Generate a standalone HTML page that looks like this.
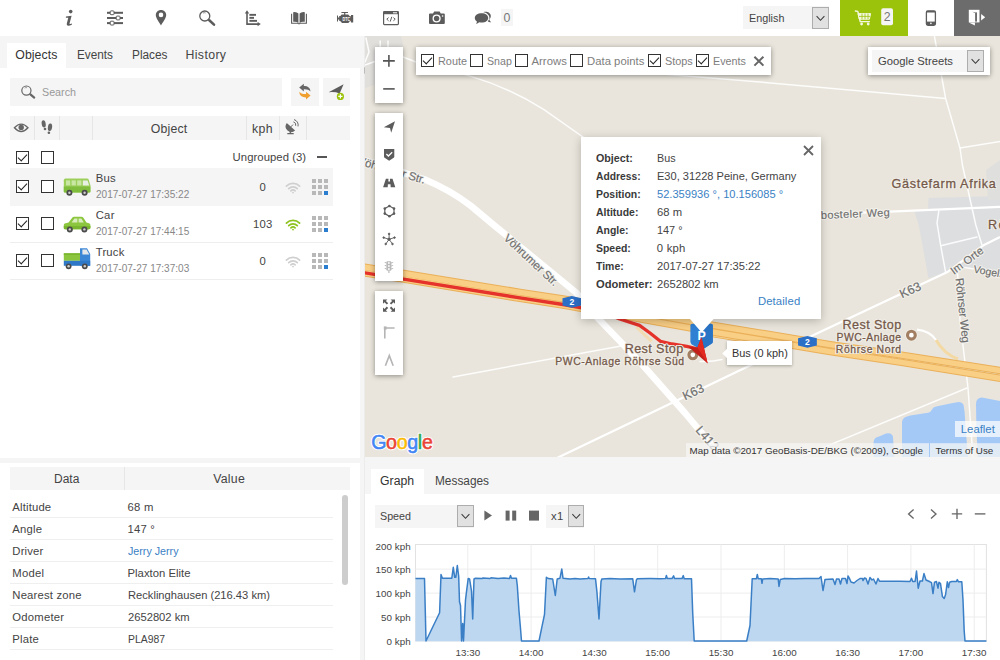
<!DOCTYPE html>
<html lang="en">
<head>
<meta charset="utf-8">
<title>GPS Tracking</title>
<style>
*{box-sizing:border-box;margin:0;padding:0}
html,body{width:1000px;height:660px;overflow:hidden;background:#fff}
body{font-family:"Liberation Sans","DejaVu Sans",sans-serif;font-size:12px;color:#444;position:relative}
.abs{position:absolute}
.t{position:absolute;white-space:nowrap;line-height:16px}
.cb{position:absolute;width:13px;height:13px;border:1px solid #333;background:#fff}
.cb.on:after{content:"";position:absolute;left:1px;top:1.5px;width:8px;height:4px;border-left:1.5px solid #222;border-bottom:1.5px solid #222;transform:rotate(-47deg)}
.ddb{position:absolute;background:#e1e1e1;border:1px solid #adadad}
.box{position:absolute;background:#fff;box-shadow:0 1px 5px rgba(0,0,0,.4)}
svg{position:absolute;overflow:visible}
svg text{white-space:pre}
</style>
</head>
<body>
<div class="abs" style="left:0px;top:36px;width:360px;height:32px;background:#f5f5f5"></div>
<div class="abs" style="left:360px;top:36px;width:5px;height:624px;background:#f5f5f5"></div>
<div class="abs" style="left:364px;top:36px;width:1px;height:624px;background:#ececec"></div>
<div class="abs" style="left:0px;top:458px;width:360px;height:5px;background:#f5f5f5"></div>
<div class="abs" style="left:365px;top:457px;width:635px;height:37px;background:#f5f5f5"></div>
<svg style="left:364px;top:66px" width="4" height="9" viewBox="0 0 4 9"><path d="M0.5 1 L3 4.5 L0.5 8 Z" fill="#8a8a8a"/></svg>
<svg style="left:0;top:0" width="540" height="36" viewBox="0 0 540 36">
<g fill="#5c5c5c" stroke="none">
<circle cx="70.7" cy="11.6" r="1.8"/>
<path d="M66 16.6 L71.6 15.7 L69.6 23.2 Q69.4 24.2 70.3 24.1 L72 23.6 L71.8 24.7 Q69.6 25.8 68 25.7 Q66.3 25.5 66.8 23.5 L68.3 17.8 L65.8 17.7 Z"/>
<rect x="107" y="11.8" width="16" height="2"/><rect x="107" y="17" width="16" height="2"/><rect x="107" y="22.1" width="16" height="2"/>
<rect x="110.2" y="10.9" width="3.8" height="3.8" rx="0.8" fill="#fff" stroke="#5c5c5c" stroke-width="1"/>
<rect x="116.2" y="16.1" width="3.8" height="3.8" rx="0.8" fill="#fff" stroke="#5c5c5c" stroke-width="1"/>
<rect x="110.2" y="21.2" width="3.8" height="3.8" rx="0.8" fill="#fff" stroke="#5c5c5c" stroke-width="1"/>
<path fill-rule="evenodd" d="M161 10 C164 10 166.2 12.2 166.2 15.1 C166.2 18.2 162.6 22.6 161 25.5 C159.4 22.6 155.8 18.2 155.8 15.1 C155.8 12.2 158 10 161 10 Z M161 12.6 A2.3 2.3 0 1 0 161 17.2 A2.3 2.3 0 1 0 161 12.6 Z"/>
<circle cx="204.8" cy="16" r="5" fill="none" stroke="#5c5c5c" stroke-width="1.3"/>
<path d="M203 13 Q204.5 12.4 205.6 12.9" fill="none" stroke="#5c5c5c" stroke-width="0.7"/>
<path d="M209.3 20.3 L214 24.6" stroke="#5c5c5c" stroke-width="2.6" stroke-linecap="round"/>
<path d="M247 10.3 L249.2 13.4 L247.8 13.4 L247.8 23.3 L257.6 23.3 L257.6 21.9 L260.8 24.1 L257.6 26.3 L257.6 24.9 L246.2 24.9 L246.2 13.4 L244.8 13.4 Z"/>
<rect x="249.4" y="13.9" width="6.6" height="1.9"/><rect x="249.4" y="16.9" width="4.6" height="1.9"/><rect x="249.4" y="19.9" width="7.6" height="1.9"/>
<path d="M293.2 12.2 Q296.5 11.6 298.4 13.6 L298.4 22.9 Q296.3 21.2 293.2 21.8 Z"/>
<path d="M304.8 12.2 Q301.5 11.6 299.6 13.6 L299.6 22.9 Q301.7 21.2 304.8 21.8 Z"/>
<path d="M291.6 13.8 L291.6 23.3 L298 23.3 Q299 24.2 300 23.3 L306.4 23.3 L306.4 13.8" fill="none" stroke="#5c5c5c" stroke-width="1.1"/>
<path d="M341.4 12 L348 12 L348 13.1 L345.3 13.1 L345.3 14.4 L348.2 14.4 L349.8 16.2 L351 16.2 L351 15 L353.2 15 L353.2 22.4 L351 22.4 L351 21.2 L349.8 21.2 L348.4 23 L342 23 L340.2 21 L339.2 21 L339.2 19.4 L338 19.4 L338 21.6 L337 21.6 L337 15.4 L338 15.4 L338 17.6 L339.2 17.6 L339.2 16 L340.4 16 L341.6 14.4 L344.1 14.4 L344.1 13.1 L341.4 13.1 Z"/>
<rect x="383.6" y="11.6" width="14.8" height="13" rx="0.8" fill="none" stroke="#5c5c5c" stroke-width="1.2"/>
<rect x="383.6" y="11.6" width="14.8" height="2.6"/>
<rect x="393" y="12.3" width="4" height="1" fill="#fff"/>
<path d="M388.6 17.6 L386.8 19.2 L388.6 20.8 M393.4 17.6 L395.2 19.2 L393.4 20.8 M391.8 16.8 L390.2 21.6" fill="none" stroke="#5c5c5c" stroke-width="1"/>
<path fill-rule="evenodd" d="M430 13.6 L433 13.6 L434.2 11.6 L439.6 11.6 L440.8 13.6 L443.8 13.6 Q444.8 13.6 444.8 14.6 L444.8 23 Q444.8 24 443.8 24 L430 24 Q429 24 429 23 L429 14.6 Q429 13.6 430 13.6 Z M436.6 14.4 A4.1 4.1 0 1 0 436.6 22.6 A4.1 4.1 0 1 0 436.6 14.4 Z M442.6 15.2 A0.8 0.8 0 1 0 442.6 16.8 A0.8 0.8 0 1 0 442.6 15.2 Z"/>
<circle cx="436.6" cy="18.5" r="2.7"/>
<path d="M481.6 13.2 C485.4 13.2 488.2 15.2 488.2 17.9 C488.2 20.6 485.4 22.6 481.6 22.6 C480.8 22.6 480 22.5 479.3 22.3 C478.4 23.2 477.2 23.8 476 24 C476.6 23.2 476.9 22.3 476.9 21.4 C475.6 20.5 474.8 19.3 474.8 17.9 C474.8 15.2 477.8 13.2 481.6 13.2 Z"/>
<path d="M483.4 12.2 C486.4 11 490.6 12.6 490.8 15.8 C490.9 17.2 490.3 18.4 489.4 19.2 C489.5 20.4 490.2 21.4 491.2 22.2 C489.8 22.3 488.6 21.8 487.8 21.2 C489 20.2 489.5 18.9 489.4 17.6 C489.2 14.6 486.4 12.6 483.4 12.2 Z"/>
</g>
<text x="342.6" y="20.6" font-size="4.6" font-weight="bold" fill="#fff" font-family="Liberation Sans,sans-serif" textLength="7.6" lengthAdjust="spacingAndGlyphs">DTC</text>
</svg>
<div class="abs" style="left:501px;top:8.5px;width:12px;height:17px;background:#f5f5f5"></div>
<div class="t" style="left:503.58px;top:10.0px;font-size:12.3px;color:#777">0</div>
<div class="abs" style="left:743px;top:6px;width:86px;height:23px;background:#f5f5f5"></div>
<div class="t" style="left:748.80px;top:10.0px;font-size:11.3px;color:#444;transform:scaleX(0.9551);transform-origin:0 0">English</div>
<div class="ddb" style="left:812px;top:7px;width:17px;height:22px"><svg width="17" height="22" viewBox="0 0 17 22" style="position:absolute;left:-1px;top:-1px"><path d="M4.6 9.2 L8.5 13.3 L12.4 9.2" fill="none" stroke="#3a3a3a" stroke-width="1.05"/></svg></div>
<div class="abs" style="left:840px;top:0px;width:68px;height:36px;background:#9cc30c"></div>
<div class="abs" style="left:954px;top:0px;width:46px;height:36px;background:#6c6c6c"></div>
<svg style="left:840px;top:0" width="160" height="36" viewBox="840 0 160 36">
<g fill="none" stroke="#f4f8e0" stroke-width="1.4" stroke-linejoin="round" stroke-linecap="round">
<path d="M855.4 11 L857.8 11.4 L860.2 21.6 L869.4 21.6"/>
<path d="M858.4 13.6 L870.6 13.6 L869.4 19.2 L859.6 19.2 Z" fill="#f4f8e0" stroke-width="1"/>
</g>
<g stroke="#9cc30c" stroke-width="0.8"><path d="M862 13.6 V19.2 M865 13.6 V19.2 M868 13.6 V19.2 M859 16.4 H870"/></g>
<circle cx="861.6" cy="24" r="1.4" fill="#f4f8e0"/><circle cx="868.2" cy="24" r="1.4" fill="#f4f8e0"/>
<rect x="881.2" y="8.2" width="11.8" height="17" rx="2" fill="#f5f5f5"/>
<rect x="926.4" y="10.9" width="9" height="14.4" rx="1.5" fill="none" stroke="#5c5c5c" stroke-width="1.3"/>
<rect x="926.4" y="21.6" width="9" height="3.4" fill="#5c5c5c"/>
<rect x="926.4" y="10.9" width="9" height="1.6" fill="#5c5c5c"/>
<circle cx="930.9" cy="23.4" r="0.8" fill="#fff"/>
<rect x="968.8" y="9.8" width="10.7" height="12.6" fill="#fff"/>
<path d="M968.8 22.4 H974.9 V25.6 Z" fill="#fff"/>
<rect x="975.1" y="12.4" width="1.9" height="9.2" fill="#6c6c6c"/>
<path d="M972.2 11.8 L975.2 12.3 L975.2 13 Z" fill="#6c6c6c"/>
<path d="M981.1 13.9 L985.2 17.2 L981.1 20.5 Z" fill="#fff"/>
</svg>
<div class="t" style="left:883.68px;top:9.0px;font-size:12.3px;color:#777">2</div>
<div class="abs" style="left:7px;top:43px;width:59px;height:25px;background:#fff"></div>
<div class="t" style="left:15.30px;top:47.0px;font-size:12.3px;color:#333;letter-spacing:0.050px">Objects</div>
<div class="t" style="left:76.60px;top:47.0px;font-size:12.3px;color:#444;transform:scaleX(0.9574);transform-origin:0 0">Events</div>
<div class="t" style="left:131.50px;top:47.0px;font-size:12.3px;color:#444;transform:scaleX(0.9616);transform-origin:0 0">Places</div>
<div class="t" style="left:185.50px;top:47.0px;font-size:12.3px;color:#444;letter-spacing:0.372px">History</div>
<div class="abs" style="left:10px;top:78px;width:272px;height:28px;background:#f5f5f5"></div>
<svg style="left:19px;top:84px" width="18" height="16" viewBox="19 84 18 16"><circle cx="26.4" cy="90.6" r="4.6" fill="none" stroke="#666" stroke-width="1.2"/><path d="M24.6 88 Q25.8 87.3 27 87.7" fill="none" stroke="#666" stroke-width="0.6"/><path d="M30.4 94.4 L34.2 97.6" stroke="#666" stroke-width="2.2" stroke-linecap="round"/></svg>
<div class="t" style="left:42.30px;top:84.0px;font-size:11.3px;color:#999;transform:scaleX(0.9496);transform-origin:0 0">Search</div>
<div class="abs" style="left:291px;top:78px;width:28px;height:28px;background:#f5f5f5"></div>
<div class="abs" style="left:322.5px;top:78px;width:27.5px;height:28px;background:#f5f5f5"></div>
<svg style="left:291px;top:78px" width="60" height="28" viewBox="291 78 60 28">
<path d="M299.2 87.6 L303.8 83.8 L303.8 86 C307.8 86 310.6 88 310.4 91.6 C309.2 89.8 307 89.2 303.8 89.3 L303.8 91.4 Z" fill="#666"/>
<path d="M310.6 95.6 L306 99.6 L306 97.4 C302 97.4 299.2 95.4 299.4 91.8 C300.6 93.6 302.8 94.2 306 94.1 L306 91.8 Z" fill="#f0a030"/>
<path d="M328.6 92.3 L343.6 84.2 L339.6 93.6 Q335 91.6 328.6 92.3 Z" fill="#5c5c5c"/>
<circle cx="340.4" cy="96.4" r="3.6" fill="#9cc30c"/>
<path d="M338.3 96.4 H342.5 M340.4 94.3 V98.5" stroke="#fff" stroke-width="1.2"/>
</svg>
<div class="abs" style="left:10px;top:116px;width:340px;height:24px;background:#f5f5f5"></div>
<div class="abs" style="left:34px;top:116px;width:1px;height:24px;background:#e6e6e6"></div>
<div class="abs" style="left:59px;top:116px;width:1px;height:24px;background:#e6e6e6"></div>
<div class="abs" style="left:92px;top:116px;width:1px;height:24px;background:#e6e6e6"></div>
<div class="abs" style="left:246px;top:116px;width:1px;height:24px;background:#e6e6e6"></div>
<div class="abs" style="left:279px;top:116px;width:1px;height:24px;background:#e6e6e6"></div>
<div class="abs" style="left:306px;top:116px;width:1px;height:24px;background:#e6e6e6"></div>
<svg style="left:10px;top:116px" width="300" height="24" viewBox="10 116 300 24">
<path d="M14.4 127.8 Q21.2 120.4 28 127.8 Q21.2 135.2 14.4 127.8 Z" fill="none" stroke="#666" stroke-width="1.3"/>
<circle cx="21.2" cy="127.4" r="2.7" fill="#666"/>
<ellipse cx="43.7" cy="123.8" rx="2" ry="3.7" fill="#666" transform="rotate(-10 43.7 123.8)"/>
<ellipse cx="45" cy="129" rx="1.3" ry="1.2" fill="#666"/>
<ellipse cx="50" cy="127.2" rx="2.1" ry="3.8" fill="#666" transform="rotate(8 50 127.2)"/>
<ellipse cx="48.9" cy="132.7" rx="1.3" ry="1.3" fill="#666"/>
<path d="M286.8 122.9 A5.7 5.7 0 0 0 295.1 130.6 Z" fill="#666"/>
<path d="M290.8 126.9 L293 124.6" stroke="#666" stroke-width="1"/>
<path d="M293.4 121.9 A3.2 3.2 0 0 1 295.7 125.8 M294.05 119.6 A5.6 5.6 0 0 1 298 126.4" fill="none" stroke="#666" stroke-width="1"/>
<path d="M290.3 131.2 V133.2 M287.3 133.6 H293.7" stroke="#666" stroke-width="1.3"/>
</svg>
<div class="t" style="left:150.70px;top:121.0px;font-size:12.3px;color:#444;letter-spacing:0.190px">Object</div>
<div class="t" style="left:252.10px;top:121.0px;font-size:12.3px;color:#444;letter-spacing:0.284px">kph</div>
<div class="cb on" style="left:15.5px;top:151px"></div>
<div class="cb" style="left:40.5px;top:151px"></div>
<div class="t" style="left:232.60px;top:149.0px;font-size:11.3px;color:#444;letter-spacing:0.053px">Ungrouped (3)</div>
<div class="abs" style="left:317px;top:156.3px;width:10px;height:1.5px;background:#555"></div>
<div class="abs" style="left:10px;top:168px;width:323px;height:38px;background:#f5f5f5"></div>
<div class="abs" style="left:10px;top:242px;width:323px;height:1px;background:#eeeeee"></div>
<div class="abs" style="left:10px;top:279px;width:323px;height:1px;background:#eeeeee"></div>
<div class="cb on" style="left:15.5px;top:180px"></div>
<div class="cb" style="left:40.5px;top:180px"></div>
<div class="cb on" style="left:15.5px;top:217px"></div>
<div class="cb" style="left:40.5px;top:217px"></div>
<div class="cb on" style="left:15.5px;top:254px"></div>
<div class="cb" style="left:40.5px;top:254px"></div>
<svg style="left:63px;top:177px" width="28" height="20" viewBox="0 0 28 20">
<path d="M2.5 1.5 H24 Q25.2 1.5 25.6 2.6 L27.4 8.2 V14.6 Q27.4 15.6 26.4 15.6 H1.8 Q0.8 15.6 0.8 14.6 V3.2 Q0.8 1.5 2.5 1.5 Z" fill="#9ccf5a"/>
<path d="M0.8 9.4 H27.4 V14.6 Q27.4 15.6 26.4 15.6 H1.8 Q0.8 15.6 0.8 14.6 Z" fill="#80bd3c"/>
<rect x="3" y="3.4" width="4.2" height="5" fill="#c9e7a3"/><rect x="8.6" y="3.4" width="4.2" height="5" fill="#c9e7a3"/><rect x="14.2" y="3.4" width="4.2" height="5" fill="#c9e7a3"/>
<path d="M19.8 3.4 H24.6 L26.2 8.4 H19.8 Z" fill="#e8f0e4"/>
<circle cx="6.4" cy="15.8" r="3" fill="#4a4a4a"/><circle cx="6.4" cy="15.8" r="1.2" fill="#cfcfcf"/>
<circle cx="21.6" cy="15.8" r="3" fill="#4a4a4a"/><circle cx="21.6" cy="15.8" r="1.2" fill="#cfcfcf"/>
</svg>
<svg style="left:63px;top:214px" width="28" height="20" viewBox="0 0 28 20">
<path d="M1.8 9.6 L5.6 8.6 L9.4 3.6 Q10 2.8 11 2.8 H18.4 Q19.6 2.8 20.4 3.8 L23.4 8.4 L26 9.2 Q27.4 9.6 27.4 11 V13.8 Q27.4 15.2 26 15.2 H2 Q0.8 15.2 0.8 14 V11 Q0.8 9.9 1.8 9.6 Z" fill="#8cc63e"/>
<path d="M0.8 12 H27.4 V13.8 Q27.4 15.2 26 15.2 H2 Q0.8 15.2 0.8 14 Z" fill="#7ab52f"/>
<path d="M8.6 8.4 L11.4 4.6 H14.4 V8.4 Z M15.6 4.6 H18.4 L20.8 8.4 H15.6 Z" fill="#d9edc0"/>
<circle cx="6.8" cy="15.4" r="3" fill="#4a4a4a"/><circle cx="6.8" cy="15.4" r="1.2" fill="#cfcfcf"/>
<circle cx="21.4" cy="15.4" r="3" fill="#4a4a4a"/><circle cx="21.4" cy="15.4" r="1.2" fill="#cfcfcf"/>
</svg>
<svg style="left:63px;top:247px" width="28" height="23" viewBox="0 0 28 23">
<rect x="0.8" y="6.3" width="16.4" height="7.5" fill="#8cc63e"/>
<rect x="0.8" y="6.3" width="16.4" height="1.6" fill="#7ab52f"/>
<path d="M17 1.3 H24 L27.2 7 V18.8 H17 Z" fill="#3b87d6"/>
<path d="M19.4 2.5 H23.6 L26.3 7.6 H19.4 Z" fill="#e3e7ea"/>
<rect x="0.8" y="13.8" width="26.4" height="5" fill="#2f78c8"/>
<circle cx="5.6" cy="19.3" r="2.9" fill="#4a4a4a"/><circle cx="5.6" cy="19.3" r="1.2" fill="#cfcfcf"/>
<circle cx="21.8" cy="19.3" r="2.9" fill="#4a4a4a"/><circle cx="21.8" cy="19.3" r="1.2" fill="#cfcfcf"/>
</svg>
<div class="t" style="left:95.70px;top:170.0px;font-size:11.3px;color:#444;letter-spacing:0.292px">Bus</div>
<div class="t" style="left:95.70px;top:186.5px;font-size:10.4px;color:#888;transform:scaleX(0.9661);transform-origin:0 0">2017-07-27 17:35:22</div>
<div class="t" style="left:259.46px;top:179.0px;font-size:11.3px;color:#444">0</div>
<svg style="left:283.7px;top:180px" width="18" height="14" viewBox="-9 -8 18 14"><g fill="none" stroke="#cfcfcf" stroke-width="1.7" stroke-linecap="round"><path d="M-6.6 -1.9 A9.4 9.4 0 0 1 6.6 -1.9"/><path d="M-4.3 0.6 A6.1 6.1 0 0 1 4.3 0.6"/><path d="M-2.1 2.9 A3 3 0 0 1 2.1 2.9"/></g><circle cx="0" cy="4.6" r="0.9" fill="#cfcfcf"/></svg>
<svg style="left:312.2px;top:179px" width="16" height="16" viewBox="0 0 16 16"><rect x="0" y="0" width="4" height="4" fill="#b8b8b8"/><rect x="6" y="0" width="4" height="4" fill="#b8b8b8"/><rect x="12" y="0" width="4" height="4" fill="#b8b8b8"/><rect x="0" y="6" width="4" height="4" fill="#b8b8b8"/><rect x="6" y="6" width="4" height="4" fill="#b8b8b8"/><rect x="12" y="6" width="4" height="4" fill="#b8b8b8"/><rect x="0" y="12" width="4" height="4" fill="#b8b8b8"/><rect x="6" y="12" width="4" height="4" fill="#b8b8b8"/><rect x="12" y="12" width="4" height="4" fill="#2b7dd0"/></svg>
<div class="t" style="left:95.70px;top:207.0px;font-size:11.3px;color:#444;letter-spacing:0.273px">Car</div>
<div class="t" style="left:95.70px;top:223.5px;font-size:10.4px;color:#888;transform:scaleX(0.9661);transform-origin:0 0">2017-07-27 17:44:15</div>
<div class="t" style="left:252.89px;top:216.0px;font-size:11.3px;color:#444;letter-spacing:0.283px">103</div>
<svg style="left:283.7px;top:217px" width="18" height="14" viewBox="-9 -8 18 14"><g fill="none" stroke="#8dc21f" stroke-width="1.7" stroke-linecap="round"><path d="M-6.6 -1.9 A9.4 9.4 0 0 1 6.6 -1.9"/><path d="M-4.3 0.6 A6.1 6.1 0 0 1 4.3 0.6"/><path d="M-2.1 2.9 A3 3 0 0 1 2.1 2.9"/></g><circle cx="0" cy="4.6" r="0.9" fill="#8dc21f"/></svg>
<svg style="left:312.2px;top:216px" width="16" height="16" viewBox="0 0 16 16"><rect x="0" y="0" width="4" height="4" fill="#b8b8b8"/><rect x="6" y="0" width="4" height="4" fill="#b8b8b8"/><rect x="12" y="0" width="4" height="4" fill="#b8b8b8"/><rect x="0" y="6" width="4" height="4" fill="#b8b8b8"/><rect x="6" y="6" width="4" height="4" fill="#b8b8b8"/><rect x="12" y="6" width="4" height="4" fill="#b8b8b8"/><rect x="0" y="12" width="4" height="4" fill="#b8b8b8"/><rect x="6" y="12" width="4" height="4" fill="#b8b8b8"/><rect x="12" y="12" width="4" height="4" fill="#2b7dd0"/></svg>
<div class="t" style="left:95.70px;top:244.0px;font-size:11.3px;color:#444;letter-spacing:0.209px">Truck</div>
<div class="t" style="left:95.70px;top:260.5px;font-size:10.4px;color:#888;transform:scaleX(0.9661);transform-origin:0 0">2017-07-27 17:37:03</div>
<div class="t" style="left:259.46px;top:253.0px;font-size:11.3px;color:#444">0</div>
<svg style="left:283.7px;top:254px" width="18" height="14" viewBox="-9 -8 18 14"><g fill="none" stroke="#cfcfcf" stroke-width="1.7" stroke-linecap="round"><path d="M-6.6 -1.9 A9.4 9.4 0 0 1 6.6 -1.9"/><path d="M-4.3 0.6 A6.1 6.1 0 0 1 4.3 0.6"/><path d="M-2.1 2.9 A3 3 0 0 1 2.1 2.9"/></g><circle cx="0" cy="4.6" r="0.9" fill="#cfcfcf"/></svg>
<svg style="left:312.2px;top:253px" width="16" height="16" viewBox="0 0 16 16"><rect x="0" y="0" width="4" height="4" fill="#b8b8b8"/><rect x="6" y="0" width="4" height="4" fill="#b8b8b8"/><rect x="12" y="0" width="4" height="4" fill="#b8b8b8"/><rect x="0" y="6" width="4" height="4" fill="#b8b8b8"/><rect x="6" y="6" width="4" height="4" fill="#b8b8b8"/><rect x="12" y="6" width="4" height="4" fill="#b8b8b8"/><rect x="0" y="12" width="4" height="4" fill="#b8b8b8"/><rect x="6" y="12" width="4" height="4" fill="#b8b8b8"/><rect x="12" y="12" width="4" height="4" fill="#2b7dd0"/></svg>
<div class="abs" style="left:10px;top:466.5px;width:340px;height:23.5px;background:#f5f5f5"></div>
<div class="abs" style="left:124px;top:466.5px;width:1px;height:23.5px;background:#e6e6e6"></div>
<div class="t" style="left:54.00px;top:471.0px;font-size:12.3px;color:#444;transform:scaleX(0.9738);transform-origin:0 0">Data</div>
<div class="t" style="left:213.27px;top:471.0px;font-size:12.3px;color:#444;letter-spacing:0.229px">Value</div>
<div class="t" style="left:12.30px;top:499.0px;font-size:11.3px;color:#444;letter-spacing:0.162px">Altitude</div>
<div class="t" style="left:127.50px;top:499.0px;font-size:11.3px;color:#444;letter-spacing:0.251px">68 m</div>
<div class="abs" style="left:10px;top:517px;width:323px;height:1px;background:#efefef"></div>
<div class="t" style="left:12.30px;top:521.0px;font-size:11.3px;color:#444;letter-spacing:0.217px">Angle</div>
<div class="t" style="left:127.50px;top:521.0px;font-size:11.3px;color:#444;letter-spacing:0.199px">147 °</div>
<div class="abs" style="left:10px;top:539px;width:323px;height:1px;background:#efefef"></div>
<div class="t" style="left:12.30px;top:543.0px;font-size:11.3px;color:#444;letter-spacing:0.181px">Driver</div>
<div class="t" style="left:127.50px;top:543.0px;font-size:11.3px;color:#3a7fc4;transform:scaleX(0.9464);transform-origin:0 0">Jerry Jerry</div>
<div class="abs" style="left:10px;top:561px;width:323px;height:1px;background:#efefef"></div>
<div class="t" style="left:12.30px;top:565.0px;font-size:11.3px;color:#444;letter-spacing:0.231px">Model</div>
<div class="t" style="left:127.50px;top:565.0px;font-size:11.3px;color:#444;letter-spacing:0.016px">Plaxton Elite</div>
<div class="abs" style="left:10px;top:583px;width:323px;height:1px;background:#efefef"></div>
<div class="t" style="left:12.30px;top:587.0px;font-size:11.3px;color:#444;letter-spacing:0.183px">Nearest zone</div>
<div class="t" style="left:127.50px;top:587.0px;font-size:11.3px;color:#444;transform:scaleX(0.9872);transform-origin:0 0">Recklinghausen (216.43 km)</div>
<div class="abs" style="left:10px;top:605px;width:323px;height:1px;background:#efefef"></div>
<div class="t" style="left:12.30px;top:609.0px;font-size:11.3px;color:#444;letter-spacing:0.215px">Odometer</div>
<div class="t" style="left:127.50px;top:609.0px;font-size:11.3px;color:#444;transform:scaleX(0.9904);transform-origin:0 0">2652802 km</div>
<div class="abs" style="left:10px;top:627px;width:323px;height:1px;background:#efefef"></div>
<div class="t" style="left:12.30px;top:631.0px;font-size:11.3px;color:#444;letter-spacing:0.193px">Plate</div>
<div class="t" style="left:127.50px;top:631.0px;font-size:11.3px;color:#444;transform:scaleX(0.9201);transform-origin:0 0">PLA987</div>
<div class="abs" style="left:10px;top:649px;width:323px;height:1px;background:#efefef"></div>
<div class="abs" style="left:342.4px;top:495px;width:5.4px;height:90px;background:#cdcdcd;border-radius:3px"></div>
<div class="abs" style="left:371px;top:469px;width:53px;height:25px;background:#fff"></div>
<div class="t" style="left:380.40px;top:473.0px;font-size:12.3px;color:#333;transform:scaleX(0.9975);transform-origin:0 0">Graph</div>
<div class="t" style="left:434.60px;top:473.0px;font-size:12.3px;color:#444;transform:scaleX(0.9633);transform-origin:0 0">Messages</div>
<div class="abs" style="left:375px;top:504.5px;width:99px;height:23px;background:#f5f5f5"></div>
<div class="t" style="left:380.40px;top:508.0px;font-size:11.3px;color:#444;transform:scaleX(0.9487);transform-origin:0 0">Speed</div>
<div class="ddb" style="left:457px;top:505px;width:17px;height:22px"><svg width="17" height="22" viewBox="0 0 17 22" style="position:absolute;left:-1px;top:-1px"><path d="M4.6 9.2 L8.5 13.3 L12.4 9.2" fill="none" stroke="#3a3a3a" stroke-width="1.05"/></svg></div>
<svg style="left:480px;top:505px" width="65" height="22" viewBox="480 505 65 22">
<path d="M484.4 510.6 L492 515.6 L484.4 520.6 Z" fill="#666"/>
<rect x="505.6" y="510.6" width="4" height="10" fill="#666"/><rect x="512.2" y="510.6" width="4" height="10" fill="#666"/>
<rect x="529" y="510.6" width="10" height="10" fill="#666"/>
</svg>
<div class="abs" style="left:546px;top:504.5px;width:38px;height:23px;background:#f5f5f5"></div>
<div class="t" style="left:551.00px;top:508.0px;font-size:11.3px;color:#444;letter-spacing:0.358px">x1</div>
<div class="ddb" style="left:567.5px;top:505px;width:16.5px;height:22px"><svg width="16.5" height="22" viewBox="0 0 16.5 22" style="position:absolute;left:-1px;top:-1px"><path d="M4.35 9.2 L8.25 13.3 L12.15 9.2" fill="none" stroke="#3a3a3a" stroke-width="1.05"/></svg></div>
<svg style="left:900px;top:503px" width="100" height="22" viewBox="900 503 100 22">
<g fill="none" stroke="#666" stroke-width="1.35">
<path d="M913.6 509.4 L908.6 513.9 L913.6 518.4"/>
<path d="M931 509.4 L936 513.9 L931 518.4"/>
<path d="M951.8 513.9 H962.2 M957 508.7 V519.1"/>
<path d="M974.8 513.9 H985.4"/>
</g></svg>
<svg style="left:365px;top:494px" width="635" height="166" viewBox="365 494 635 166">
<rect x="415.5" y="544.5" width="570.9" height="96.5" fill="#fff" stroke="#e2e2e2" stroke-width="1"/>
<path d="M467.8 544.5 V641" stroke="#ededed" stroke-width="1"/><path d="M531.1 544.5 V641" stroke="#ededed" stroke-width="1"/><path d="M594.4 544.5 V641" stroke="#ededed" stroke-width="1"/><path d="M657.7 544.5 V641" stroke="#ededed" stroke-width="1"/><path d="M721.0 544.5 V641" stroke="#ededed" stroke-width="1"/><path d="M784.3 544.5 V641" stroke="#ededed" stroke-width="1"/><path d="M847.6 544.5 V641" stroke="#ededed" stroke-width="1"/><path d="M910.9 544.5 V641" stroke="#ededed" stroke-width="1"/><path d="M974.2 544.5 V641" stroke="#ededed" stroke-width="1"/><path d="M415.5 617.0 H986.4" stroke="#ededed" stroke-width="1"/><path d="M415.5 593.1 H986.4" stroke="#ededed" stroke-width="1"/><path d="M415.5 569.1 H986.4" stroke="#ededed" stroke-width="1"/>
<path d="M415.5 578.5 L424.5 578.5 L426.0 641.0 L439.6 612.7 L441.0 574.5 L442.4 578.2 L451.8 578.2 L453.3 567.3 L454.7 577.3 L455.8 577.3 L457.3 565.5 L458.7 576.4 L459.5 601.8 L460.5 605.5 L461.6 641.0 L462.7 623.6 L463.5 641.0 L465.5 600.0 L466.4 592.7 L468.2 578.5 L469.6 579.0 L471.5 591.0 L472.7 619.0 L474.0 579.0 L475.5 578.2 L482.0 578.6 L483.0 577.9 L490.0 578.5 L491.0 577.8 L498.0 578.5 L504.0 578.0 L509.5 578.4 L510.5 575.5 L511.5 578.3 L516.4 578.2 L517.3 585.5 L519.0 611.0 L520.4 627.3 L521.5 641.0 L539.0 641.0 L541.8 627.3 L544.5 614.5 L546.4 577.3 L548.2 578.5 L552.7 579.0 L555.3 595.5 L557.2 579.0 L560.0 578.2 L561.8 569.0 L563.0 578.2 L570.0 578.9 L575.0 578.4 L580.0 578.9 L588.0 578.5 L588.6 577.0 L589.2 578.6 L595.5 578.7 L597.0 592.7 L599.0 619.0 L601.0 581.8 L601.8 579.0 L610.0 578.5 L620.0 578.9 L632.7 578.7 L634.5 591.8 L636.4 580.0 L637.3 578.7 L650.0 578.6 L660.0 578.7 L665.5 578.6 L666.4 575.5 L667.3 578.5 L672.0 578.6 L673.6 575.8 L674.5 578.6 L682.0 578.6 L683.3 575.6 L684.2 578.7 L691.5 578.7 L692.7 612.7 L694.2 641.0 L746.7 641.0 L750.0 625.5 L752.2 578.7 L756.4 578.7 L757.3 574.5 L758.2 578.7 L761.3 578.7 L762.0 583.3 L762.7 579.0 L770.0 578.6 L778.2 579.0 L779.0 586.4 L780.2 579.6 L784.5 578.5 L795.0 578.8 L805.0 578.4 L819.0 578.5 L821.0 576.5 L823.0 590.5 L825.0 579.5 L833.0 579.0 L835.0 584.5 L836.5 579.0 L839.0 579.0 L840.5 584.0 L842.0 578.5 L845.5 578.5 L847.0 583.5 L848.0 576.0 L849.5 578.5 L851.0 582.0 L854.0 583.0 L857.0 580.5 L860.0 578.5 L862.5 578.5 L863.0 580.5 L864.5 578.0 L866.0 578.5 L868.0 584.0 L870.0 577.5 L872.0 580.0 L873.5 579.0 L876.0 584.0 L878.0 578.5 L879.5 581.2 L890.0 581.3 L900.0 581.2 L910.0 581.5 L911.5 578.2 L912.7 581.5 L915.1 581.5 L916.5 571.0 L918.2 588.2 L920.0 581.0 L922.4 581.0 L924.0 573.6 L926.0 580.0 L930.0 581.8 L931.5 582.7 L933.0 593.6 L934.5 582.2 L936.4 581.5 L938.0 588.2 L939.0 582.2 L940.5 583.6 L942.4 596.4 L944.2 598.5 L945.6 594.5 L947.3 581.8 L948.5 587.6 L949.6 582.2 L951.8 581.5 L956.4 581.5 L957.3 579.6 L958.5 581.8 L961.8 581.8 L963.0 600.0 L964.2 631.0 L965.0 641.0 L986.4 641.0 L986.4 641.2 L415.5 641.2 Z" fill="#bdd7f1"/>
<path d="M415.5 578.5 L424.5 578.5 L426.0 641.0 L439.6 612.7 L441.0 574.5 L442.4 578.2 L451.8 578.2 L453.3 567.3 L454.7 577.3 L455.8 577.3 L457.3 565.5 L458.7 576.4 L459.5 601.8 L460.5 605.5 L461.6 641.0 L462.7 623.6 L463.5 641.0 L465.5 600.0 L466.4 592.7 L468.2 578.5 L469.6 579.0 L471.5 591.0 L472.7 619.0 L474.0 579.0 L475.5 578.2 L482.0 578.6 L483.0 577.9 L490.0 578.5 L491.0 577.8 L498.0 578.5 L504.0 578.0 L509.5 578.4 L510.5 575.5 L511.5 578.3 L516.4 578.2 L517.3 585.5 L519.0 611.0 L520.4 627.3 L521.5 641.0 L539.0 641.0 L541.8 627.3 L544.5 614.5 L546.4 577.3 L548.2 578.5 L552.7 579.0 L555.3 595.5 L557.2 579.0 L560.0 578.2 L561.8 569.0 L563.0 578.2 L570.0 578.9 L575.0 578.4 L580.0 578.9 L588.0 578.5 L588.6 577.0 L589.2 578.6 L595.5 578.7 L597.0 592.7 L599.0 619.0 L601.0 581.8 L601.8 579.0 L610.0 578.5 L620.0 578.9 L632.7 578.7 L634.5 591.8 L636.4 580.0 L637.3 578.7 L650.0 578.6 L660.0 578.7 L665.5 578.6 L666.4 575.5 L667.3 578.5 L672.0 578.6 L673.6 575.8 L674.5 578.6 L682.0 578.6 L683.3 575.6 L684.2 578.7 L691.5 578.7 L692.7 612.7 L694.2 641.0 L746.7 641.0 L750.0 625.5 L752.2 578.7 L756.4 578.7 L757.3 574.5 L758.2 578.7 L761.3 578.7 L762.0 583.3 L762.7 579.0 L770.0 578.6 L778.2 579.0 L779.0 586.4 L780.2 579.6 L784.5 578.5 L795.0 578.8 L805.0 578.4 L819.0 578.5 L821.0 576.5 L823.0 590.5 L825.0 579.5 L833.0 579.0 L835.0 584.5 L836.5 579.0 L839.0 579.0 L840.5 584.0 L842.0 578.5 L845.5 578.5 L847.0 583.5 L848.0 576.0 L849.5 578.5 L851.0 582.0 L854.0 583.0 L857.0 580.5 L860.0 578.5 L862.5 578.5 L863.0 580.5 L864.5 578.0 L866.0 578.5 L868.0 584.0 L870.0 577.5 L872.0 580.0 L873.5 579.0 L876.0 584.0 L878.0 578.5 L879.5 581.2 L890.0 581.3 L900.0 581.2 L910.0 581.5 L911.5 578.2 L912.7 581.5 L915.1 581.5 L916.5 571.0 L918.2 588.2 L920.0 581.0 L922.4 581.0 L924.0 573.6 L926.0 580.0 L930.0 581.8 L931.5 582.7 L933.0 593.6 L934.5 582.2 L936.4 581.5 L938.0 588.2 L939.0 582.2 L940.5 583.6 L942.4 596.4 L944.2 598.5 L945.6 594.5 L947.3 581.8 L948.5 587.6 L949.6 582.2 L951.8 581.5 L956.4 581.5 L957.3 579.6 L958.5 581.8 L961.8 581.8 L963.0 600.0 L964.2 631.0 L965.0 641.0 L986.4 641.0" fill="none" stroke="#3a7fc6" stroke-width="1.5" stroke-linejoin="round"/>
</svg>
<div class="t" style="left:386.59px;top:633.5px;font-size:9.8px;color:#444;letter-spacing:0.060px">0 kph</div>
<div class="t" style="left:381.08px;top:609.5px;font-size:9.8px;color:#444;letter-spacing:0.060px">50 kph</div>
<div class="t" style="left:375.57px;top:585.5px;font-size:9.8px;color:#444;letter-spacing:0.060px">100 kph</div>
<div class="t" style="left:375.57px;top:561.5px;font-size:9.8px;color:#444;letter-spacing:0.060px">150 kph</div>
<div class="t" style="left:375.57px;top:538.5px;font-size:9.8px;color:#444;letter-spacing:0.060px">200 kph</div>
<div class="t" style="left:455.44px;top:644.5px;font-size:9.8px;color:#444;letter-spacing:0.050px">13:30</div>
<div class="t" style="left:518.74px;top:644.5px;font-size:9.8px;color:#444;letter-spacing:0.050px">14:00</div>
<div class="t" style="left:582.04px;top:644.5px;font-size:9.8px;color:#444;letter-spacing:0.050px">14:30</div>
<div class="t" style="left:645.34px;top:644.5px;font-size:9.8px;color:#444;letter-spacing:0.050px">15:00</div>
<div class="t" style="left:708.64px;top:644.5px;font-size:9.8px;color:#444;letter-spacing:0.050px">15:30</div>
<div class="t" style="left:771.94px;top:644.5px;font-size:9.8px;color:#444;letter-spacing:0.050px">16:00</div>
<div class="t" style="left:835.24px;top:644.5px;font-size:9.8px;color:#444;letter-spacing:0.050px">16:30</div>
<div class="t" style="left:898.54px;top:644.5px;font-size:9.8px;color:#444;letter-spacing:0.050px">17:00</div>
<div class="t" style="left:961.84px;top:644.5px;font-size:9.8px;color:#444;letter-spacing:0.050px">17:30</div>
<svg style="left:365px;top:36px;overflow:hidden" width="635" height="421" viewBox="365 36 635 421" font-family="Liberation Sans, sans-serif">
<rect x="365" y="36" width="635" height="421" fill="#e9e5dc"/>
<!-- urban areas -->
<path d="M365 36 L401 36 Q406 52 401 66 Q392 80 365 88 Z" fill="#e0dfdc"/>
<path d="M928.5 198 L1000 196 L1000 273 L964.8 267.4 L948 271.7 L928.5 278.3 L918.8 225 L914.5 211.7 L928 210 Z" fill="#dddee0"/>
<path d="M986 170 L1000 160 L1000 200 L988 200 Z" fill="#dfdfdd"/>
<!-- water -->
<path d="M902 422 Q902.5 417.5 907 416.4 L910.4 415.6 L928 412.8 Q931 412 932 409.5 Q933 407 936 406.4 L950.4 403.6 L957 402.2 Q962 401.6 963.6 405 L964.6 412 L966 432 L968 458 L902 458 Z" fill="#a5c9f7"/>
<path d="M976 404 Q976 398 982 397.6 L1000 401 L1000 458 L978 458 L976.4 430 Z" fill="#a5c9f7"/>
<path d="M873.6 442 Q874 437.6 879 436.6 L886 433.6 Q892 432.4 893 437 L894.4 458 L873.6 458 Z" fill="#a5c9f7"/>
<!-- minor roads -->
<g fill="none" stroke="#ffffff" stroke-width="1.5" stroke-opacity="0.9" stroke-linecap="round" stroke-linejoin="round">
<path d="M365 65 Q385 57 403 57 L416 62 Q450 70 471 76.4 Q510 88 544 109.6 L600 149"/>
<path d="M366 38 L369 52 L365 62"/>
<path d="M380.2 41 V48 M388 41 V48"/>
<path d="M650 73 L760 82 L945.6 98.4"/>
<path d="M934.4 36 L945.6 98.4 L960 148 L962.4 165 L972 208 L975.8 225 L981.8 244.4"/>
<path d="M960 148 L1000 141.5"/>
<path d="M453 377 L621 346"/>
<path d="M957.4 270 L960 320 L968 388 L973 458"/>
<path d="M797 458.5 L967 388"/>
<path d="M700 361.5 Q712 362 722 359.5"/>
<path d="M938.8 211 L937 223 L940.6 245 L945.5 271.7"/>
<path d="M941.8 245.6 L977 237"/>
<path d="M964.8 267.4 L1000 273"/>
</g>
<path d="M821 214 L889.7 211.7 L1000 206.8" fill="none" stroke="#ffffff" stroke-width="2.2"/>
<path d="M557 458 L820 332 L948 271.7 L983 245.6 L1000 237" fill="none" stroke="#ffffff" stroke-width="2.2" stroke-linejoin="round"/>
<path d="M917 329.6 Q930 331 936 340 Q944 354 956 358" fill="none" stroke="#ffffff" stroke-width="2.2"/>
<path d="M936 340 Q944 354 958 359" fill="none" stroke="#f3d9a4" stroke-width="3"/>
<path d="M636.2 327 L651.6 341.3" fill="none" stroke="#f3dcb2" stroke-width="3"/>
<!-- main white roads -->
<path d="M360 160.5 L395 170 L426 180 Q450 190 470.6 205.6 L494.5 225.6 L576 292.5 L598.6 319 L640 362 L685 413 L726 462" fill="none" stroke="#ffffff" stroke-width="6.6" stroke-linejoin="round"/>
<!-- highway -->
<path d="M702 332.6 L760 342 L792 346.6" fill="none" stroke="#eab059" stroke-width="6"/>
<path d="M702 332.6 L760 342 L792 346.6" fill="none" stroke="#f9d596" stroke-width="4.2"/>
<path d="M360 269.3 L403.6 276.4 L520 295.4 L563 302.0 L640 315.7 L712 328.5 L828.5 347.9 L900 358.5 L1005 375.2" fill="none" stroke="#e6a54a" stroke-width="15" stroke-opacity="0"/>
<path d="M360 266.5 L403.6 273.5 L520 292.3 L563 298.9 L640 312.4 L712 325.1 L828.5 344.3 L900 354.8 L1005 371.3" fill="none" stroke="#eab059" stroke-width="7.4"/>
<path d="M360 272.2 L403.6 279.2 L520 298.4 L563 305.1 L640 318.9 L712 331.8 L828.5 351.4 L900 362.2 L1005 379.0" fill="none" stroke="#eab059" stroke-width="7.4"/>
<path d="M360 266.5 L403.6 273.5 L520 292.3 L563 298.9 L640 312.4 L712 325.1 L828.5 344.3 L900 354.8 L1005 371.3" fill="none" stroke="#f9ce85" stroke-width="5.4"/>
<path d="M360 272.2 L403.6 279.2 L520 298.4 L563 305.1 L640 318.9 L712 331.8 L828.5 351.4 L900 362.2 L1005 379.0" fill="none" stroke="#f9ce85" stroke-width="5.4"/>
<!-- route -->
<path d="M360 272.1 L403.6 279.1 L520 297.9 L563 304.5 L600 311.0 L619.7 319 L639.5 325.4 L650 333 L660.4 341.3 L672 344 L686.8 346.3 L700 349.5" fill="none" stroke="#e5322a" stroke-width="3.3" stroke-linejoin="round" stroke-linecap="round"/>
<path d="M562.5 298.2 L571.9 295.90000000000003 L581.3 298.2 L581.3 305.40000000000003 L571.9 307.7 L562.5 305.40000000000003 Z" fill="#2c6fc7"/><text x="571.9" y="304.90000000000003" font-size="8.6" font-weight="bold" fill="#fff" text-anchor="middle">2</text>
<path d="M798.0500000000001 338.25 L807.45 335.95000000000005 L816.85 338.25 L816.85 345.45000000000005 L807.45 347.75 L798.0500000000001 345.45000000000005 Z" fill="#2c6fc7"/><text x="807.45" y="344.95000000000005" font-size="8.6" font-weight="bold" fill="#fff" text-anchor="middle">2</text>
<circle cx="692.8" cy="354.8" r="6.2" fill="#f4f2ec" fill-opacity="0.8"/><circle cx="692.8" cy="354.8" r="3.9" fill="#fff" stroke="#a27f63" stroke-width="3.1"/>
<circle cx="911.4" cy="335.2" r="6.2" fill="#f4f2ec" fill-opacity="0.8"/><circle cx="911.4" cy="335.2" r="3.9" fill="#fff" stroke="#a27f63" stroke-width="3.1"/>
<!-- labels -->
<g fill="#f4f2ec" stroke="#f4f2ec" stroke-width="2.2" stroke-linejoin="round">
<text transform="translate(357,164) rotate(16.5)" font-size="11.5" textLength="70" lengthAdjust="spacing">Vöhrumer Str.</text>
<text transform="translate(503,239) rotate(43)" font-size="11.5" textLength="70" lengthAdjust="spacing">Vöhrumer Str.</text>
<text transform="translate(820.9,219) rotate(-2.4)" font-size="11" textLength="69" lengthAdjust="spacing">bosteler Weg</text>
<text transform="translate(685,400.5) rotate(-25)" font-size="12.5">K63</text>
<text transform="translate(902,298.6) rotate(-25)" font-size="12.5">K63</text>
<text transform="translate(954,275) rotate(-37)" font-size="11" textLength="38" lengthAdjust="spacing">Im Orte</text>
<text transform="translate(955.5,278.5) rotate(84)" font-size="11.5" textLength="65" lengthAdjust="spacing">Röhrser Weg</text>
<text transform="translate(973,272.5) rotate(10)" font-size="10.5">Vogels</text>
<text transform="translate(695,430.5) rotate(49)" font-size="12.5">L412</text>
</g>
<g fill="#6e6e6e" stroke="#6e6e6e" stroke-width="0.15">
<text transform="translate(357,164) rotate(16.5)" font-size="11.5" textLength="70" lengthAdjust="spacing">Vöhrumer Str.</text>
<text transform="translate(503,239) rotate(43)" font-size="11.5" textLength="70" lengthAdjust="spacing">Vöhrumer Str.</text>
<text transform="translate(820.9,219) rotate(-2.4)" font-size="11" textLength="69" lengthAdjust="spacing">bosteler Weg</text>
<text transform="translate(685,400.5) rotate(-25)" font-size="12.5">K63</text>
<text transform="translate(902,298.6) rotate(-25)" font-size="12.5">K63</text>
<text transform="translate(954,275) rotate(-37)" font-size="11" textLength="38" lengthAdjust="spacing">Im Orte</text>
<text transform="translate(955.5,278.5) rotate(84)" font-size="11.5" textLength="65" lengthAdjust="spacing">Röhrser Weg</text>
<text transform="translate(973,272.5) rotate(10)" font-size="10.5">Vogels</text>
<text transform="translate(695,430.5) rotate(49)" font-size="12.5">L412</text>
</g>
<g fill="#f4f2ec" stroke="#f4f2ec" stroke-width="2.2" stroke-linejoin="round">
<text x="624.7" y="352.6" font-size="12.6" textLength="58.5" lengthAdjust="spacing">Rest Stop</text>
<text x="555.3" y="364.6" font-size="10.4" textLength="128.7" lengthAdjust="spacing">PWC-Anlage Röhrse Süd</text>
<text x="842.6" y="329.2" font-size="12.6" textLength="58.6" lengthAdjust="spacing">Rest Stop</text>
<text x="836.6" y="341" font-size="10.4" textLength="64.4" lengthAdjust="spacing">PWC-Anlage</text>
<text x="835.8" y="352.8" font-size="10.4" textLength="65.2" lengthAdjust="spacing">Röhrse Nord</text>
<text x="891.5" y="187.8" font-size="12.6" textLength="104.3" lengthAdjust="spacing">Gästefarm Afrika</text>
<text x="987.9" y="229.2" font-size="12.6" textLength="26" lengthAdjust="spacing">Röh</text>
</g>
<g fill="#74594a" stroke="#74594a" stroke-width="0.3">
<text x="624.7" y="352.6" font-size="12.6" textLength="58.5" lengthAdjust="spacing">Rest Stop</text>
<text x="555.3" y="364.6" font-size="10.4" textLength="128.7" lengthAdjust="spacing">PWC-Anlage Röhrse Süd</text>
<text x="842.6" y="329.2" font-size="12.6" textLength="58.6" lengthAdjust="spacing">Rest Stop</text>
<text x="836.6" y="341" font-size="10.4" textLength="64.4" lengthAdjust="spacing">PWC-Anlage</text>
<text x="835.8" y="352.8" font-size="10.4" textLength="65.2" lengthAdjust="spacing">Röhrse Nord</text>
<text x="891.5" y="187.8" font-size="12.6" textLength="104.3" lengthAdjust="spacing">Gästefarm Afrika</text>
<text x="987.9" y="229.2" font-size="12.6" textLength="26" lengthAdjust="spacing">Röh</text>
</g>
<!-- google logo -->
<text x="371.2" y="448.6" font-size="19.6" stroke="#fff" stroke-width="2.6" stroke-linejoin="round" fill="#fff" textLength="61.6" lengthAdjust="spacing">Google</text>
<text x="371.2" y="448.6" font-size="19.6" stroke-width="0.55" textLength="61.6" lengthAdjust="spacing"><tspan fill="#4285f4" stroke="#4285f4">G</tspan><tspan fill="#ea4335" stroke="#ea4335">o</tspan><tspan fill="#fbbc05" stroke="#fbbc05">o</tspan><tspan fill="#4285f4" stroke="#4285f4">g</tspan><tspan fill="#34a853" stroke="#34a853">l</tspan><tspan fill="#ea4335" stroke="#ea4335">e</tspan></text>
<!-- attribution -->
<rect x="686" y="443.2" width="243" height="14.3" fill="#f5f5f5" fill-opacity="0.75"/>
<rect x="930" y="443.2" width="70" height="14.3" fill="#f5f5f5" fill-opacity="0.75"/>
<text x="689.6" y="453.6" font-size="9.8" fill="#333" textLength="233.4" lengthAdjust="spacing">Map data ©2017 GeoBasis-DE/BKG (©2009), Google</text>
<text x="935.5" y="453.6" font-size="9.8" fill="#333" textLength="57.8" lengthAdjust="spacing">Terms of Use</text>
</svg>
<div class="abs" style="left:955px;top:421.2px;width:45px;height:15.6px;background:rgba(255,255,255,.72)"></div>
<div class="t" style="left:960.80px;top:421.0px;font-size:11.3px;color:#3a7fc4;letter-spacing:0.012px">Leaflet</div>
<div class="box" style="left:375px;top:47px;width:28px;height:56px"></div>
<svg style="left:375px;top:47px" width="28" height="56" viewBox="375 47 28 56"><g stroke="#555" stroke-width="1.6" fill="none"><path d="M383 60.9 H394.8 M388.9 55 V66.8"/><path d="M383.2 88.9 H394.7"/></g></svg>
<div class="box" style="left:375px;top:113px;width:28px;height:168px"></div>
<div class="box" style="left:375px;top:291px;width:28px;height:84px"></div>
<svg style="left:375px;top:113px" width="28" height="262" viewBox="375 113 28 262">
<g fill="#5c5c5c">
<path d="M383.8 127.2 L395 121.2 L391.2 132.8 L390 128 Z"/>
<path d="M384 149 H394.3 V156.4 Q394.3 157.4 393.3 158 L389.15 160.8 L385 158 Q384 157.4 384 156.4 Z"/>
<path d="M386.4 154 L388.4 156 L392.2 152.2" fill="none" stroke="#fff" stroke-width="1.3"/>
<path d="M385.9 178.8 H388.5 L388.3 181.6 H390.1 L389.9 178.8 H392.5 L395.3 187.2 H390.7 L390.5 184.2 H387.9 L387.7 187.2 H383.1 Z"/>
</g>
<g fill="none" stroke="#5c5c5c">
<path d="M389.4 206 L394 208.6 L394 213.6 L389.4 216.2 L384.8 213.6 L384.8 208.6 Z" stroke-width="1.2"/>
</g>
<g fill="#5c5c5c">
<circle cx="389.4" cy="206" r="1.3"/><circle cx="394" cy="208.6" r="1.3"/><circle cx="394" cy="213.6" r="1.3"/><circle cx="389.4" cy="216.2" r="1.3"/><circle cx="384.8" cy="213.6" r="1.3"/><circle cx="384.8" cy="208.6" r="1.3"/>
</g>
<g stroke="#5c5c5c" stroke-width="0.9" fill="#5c5c5c">
<path d="M389.1 239.3 V234 M389.1 239.3 L394.4 237.6 M389.1 239.3 L392.4 243.9 M389.1 239.3 L385.8 243.9 M389.1 239.3 L383.8 237.6"/>
<circle cx="389.1" cy="239.3" r="1.2"/><circle cx="389.1" cy="233.9" r="0.8"/><circle cx="394.5" cy="237.6" r="0.8"/><circle cx="392.5" cy="244" r="0.8"/><circle cx="385.7" cy="244" r="0.8"/><circle cx="383.7" cy="237.6" r="0.8"/>
</g>
<g fill="#b9b9b9">
<rect x="386.4" y="261.2" width="5" height="9.6" rx="1.2"/>
<path d="M384.2 262 H386.4 V263.8 Z M393.6 262 H391.4 V263.8 Z M384.2 265 H386.4 V266.8 Z M393.6 265 H391.4 V266.8 Z M384.2 268 H386.4 V269.8 Z M393.6 268 H391.4 V269.8 Z"/>
<rect x="388.3" y="270.8" width="1.2" height="2.2"/>
</g>
<g fill="#fff"><circle cx="388.9" cy="263" r="0.9"/><circle cx="388.9" cy="266" r="0.9"/><circle cx="388.9" cy="269" r="0.9"/></g>
<g fill="#5c5c5c">
<path d="M383 299.4 H387.4 L385.9 300.9 L388.2 303.2 L386.8 304.6 L384.5 302.3 L383 303.8 Z"/>
<path d="M395 299.4 V303.8 L393.5 302.3 L391.2 304.6 L389.8 303.2 L392.1 300.9 L390.6 299.4 Z"/>
<path d="M383 311.8 V307.4 L384.5 308.9 L386.8 306.6 L388.2 308 L385.9 310.3 L387.4 311.8 Z"/>
<path d="M395 311.8 H390.6 L392.1 310.3 L389.8 308 L391.2 306.6 L393.5 308.9 L395 307.4 Z"/>
</g>
<g fill="none" stroke="#b5b5b5" stroke-width="1.6">
<path d="M384.8 338.6 V328 H394.6"/>
<path d="M385.4 365.8 L389.3 355.6 L393.2 365.8"/>
</g>
<rect x="383.8" y="326.4" width="2.8" height="3.2" fill="#b5b5b5"/>
</svg>
<div class="box" style="left:416px;top:47px;width:355px;height:28px"></div>
<div class="cb on" style="left:421px;top:54px"></div>
<div class="t" style="left:437.80px;top:53.0px;font-size:11.3px;color:#7d7d7d;transform:scaleX(0.9617);transform-origin:0 0">Route</div>
<div class="cb" style="left:470px;top:54px"></div>
<div class="t" style="left:486.60px;top:53.0px;font-size:11.3px;color:#7d7d7d;transform:scaleX(0.9397);transform-origin:0 0">Snap</div>
<div class="cb" style="left:515.4px;top:54px"></div>
<div class="t" style="left:531.40px;top:53.0px;font-size:11.3px;color:#7d7d7d;letter-spacing:0.088px">Arrows</div>
<div class="cb" style="left:570px;top:54px"></div>
<div class="t" style="left:587.00px;top:53.0px;font-size:11.3px;color:#7d7d7d;letter-spacing:0.024px">Data points</div>
<div class="cb on" style="left:648px;top:54px"></div>
<div class="t" style="left:664.60px;top:53.0px;font-size:11.3px;color:#7d7d7d;transform:scaleX(0.9621);transform-origin:0 0">Stops</div>
<div class="cb on" style="left:696.4px;top:54px"></div>
<div class="t" style="left:712.60px;top:53.0px;font-size:11.3px;color:#7d7d7d;transform:scaleX(0.9495);transform-origin:0 0">Events</div>
<svg style="left:752px;top:54px" width="14" height="14" viewBox="752 54 14 14"><path d="M754.4 56.8 L763.4 65.6 M763.4 56.8 L754.4 65.6" stroke="#666" stroke-width="2" fill="none"/></svg>
<div class="box" style="left:868px;top:47px;width:122px;height:28px"></div>
<div class="abs" style="left:872px;top:50px;width:112px;height:22px;background:#f5f5f5"></div>
<div class="t" style="left:877.60px;top:53.0px;font-size:11.3px;color:#444;transform:scaleX(0.9950);transform-origin:0 0">Google Streets</div>
<div class="ddb" style="left:967px;top:50px;width:17px;height:22px"><svg width="17" height="22" viewBox="0 0 17 22" style="position:absolute;left:-1px;top:-1px"><path d="M4.6 9.2 L8.5 13.3 L12.4 9.2" fill="none" stroke="#3a3a3a" stroke-width="1.05"/></svg></div>
<svg style="left:688px;top:322px" width="28" height="30" viewBox="688 322 28 30">
<path d="M692.4 323.8 H711 Q712.8 323.8 712.8 325.6 V341.4 Q712.8 343 711.4 343.8 L702.6 349.6 Q701.7 350 700.8 349.6 L691.8 344.6 Q690.4 343 690.4 341.4 V325.6 Q690.4 323.8 692.4 323.8 Z" fill="#2f7fd3"/>
<path d="M701.6 323.8 H711 Q712.8 323.8 712.8 325.6 V341.4 Q712.8 343 711.4 343.8 L702.6 349.6 Q702.1 349.9 701.6 350 Z" fill="#2a74c6"/>
</svg>
<div class="t" style="left:697.43px;top:328.0px;font-size:12.5px;color:#fff;font-weight:bold">P</div>
<svg style="left:688px;top:334px" width="28" height="32" viewBox="688 334 28 32">
<path d="M707.7 363.6 L701.4 337.6 L697.4 347.4 L688 346.6 Z" fill="#c3201a"/>
<path d="M707.7 363.6 L701.4 337.6 L697.4 347.4 Z" fill="#e22a20"/>
</svg>
<div class="box" style="left:581px;top:137px;width:240.4px;height:181.8px;box-shadow:0 2px 9px rgba(0,0,0,.23)"></div>
<svg style="left:688px;top:318px" width="28" height="16" viewBox="688 318 28 16"><path d="M689.6 318.6 L714 318.6 L701.6 332.4 Z" fill="#fff"/></svg>
<div class="t" style="left:595.50px;top:150.0px;font-size:11.3px;color:#3a3a3a;transform:scaleX(0.9479);transform-origin:0 0;font-weight:bold">Object:</div>
<div class="t" style="left:656.80px;top:150.0px;font-size:11.3px;color:#444;transform:scaleX(0.9501);transform-origin:0 0">Bus</div>
<div class="t" style="left:595.50px;top:168.0px;font-size:11.3px;color:#3a3a3a;transform:scaleX(0.9106);transform-origin:0 0;font-weight:bold">Address:</div>
<div class="t" style="left:656.80px;top:168.0px;font-size:11.3px;color:#444;transform:scaleX(0.9776);transform-origin:0 0">E30, 31228 Peine, Germany</div>
<div class="t" style="left:595.50px;top:186.0px;font-size:11.3px;color:#3a3a3a;transform:scaleX(0.9250);transform-origin:0 0;font-weight:bold">Position:</div>
<div class="t" style="left:656.80px;top:186.0px;font-size:11.3px;color:#3a7fc4;transform:scaleX(0.9826);transform-origin:0 0">52.359936 °, 10.156085 °</div>
<div class="t" style="left:595.50px;top:204.0px;font-size:11.3px;color:#3a3a3a;transform:scaleX(0.9250);transform-origin:0 0;font-weight:bold">Altitude:</div>
<div class="t" style="left:656.80px;top:204.0px;font-size:11.3px;color:#444;transform:scaleX(0.9951);transform-origin:0 0">68 m</div>
<div class="t" style="left:595.50px;top:222.0px;font-size:11.3px;color:#3a3a3a;transform:scaleX(0.9250);transform-origin:0 0;font-weight:bold">Angle:</div>
<div class="t" style="left:656.80px;top:222.0px;font-size:11.3px;color:#444;transform:scaleX(0.9618);transform-origin:0 0">147 °</div>
<div class="t" style="left:595.50px;top:240.0px;font-size:11.3px;color:#3a3a3a;transform:scaleX(0.9250);transform-origin:0 0;font-weight:bold">Speed:</div>
<div class="t" style="left:656.80px;top:240.0px;font-size:11.3px;color:#444;letter-spacing:0.207px">0 kph</div>
<div class="t" style="left:595.50px;top:258.0px;font-size:11.3px;color:#3a3a3a;transform:scaleX(0.9250);transform-origin:0 0;font-weight:bold">Time:</div>
<div class="t" style="left:656.80px;top:258.0px;font-size:11.3px;color:#444;transform:scaleX(0.9864);transform-origin:0 0">2017-07-27 17:35:22</div>
<div class="t" style="left:595.50px;top:276.0px;font-size:11.3px;color:#3a3a3a;transform:scaleX(0.9889);transform-origin:0 0;font-weight:bold">Odometer:</div>
<div class="t" style="left:656.80px;top:276.0px;font-size:11.3px;color:#444;transform:scaleX(0.9904);transform-origin:0 0">2652802 km</div>
<div class="t" style="left:757.90px;top:293.0px;font-size:11.3px;color:#3a7fc4;letter-spacing:0.120px">Detailed</div>
<svg style="left:802px;top:144px" width="14" height="14" viewBox="802 144 14 14"><path d="M804 146 L813 155 M813 146 L804 155" stroke="#666" stroke-width="1.8" fill="none"/></svg>
<div class="box" style="left:727.4px;top:341.4px;width:64.8px;height:23.2px;box-shadow:0 1px 3px rgba(0,0,0,.3)"></div>
<svg style="left:720px;top:346px" width="9" height="14" viewBox="720 346 9 14"><path d="M728 347.8 L722.2 353.4 L728 359 Z" fill="#fff"/></svg>
<div class="t" style="left:731.70px;top:345.0px;font-size:11.3px;color:#333;transform:scaleX(0.9657);transform-origin:0 0">Bus (0 kph)</div>
</body>
</html>
